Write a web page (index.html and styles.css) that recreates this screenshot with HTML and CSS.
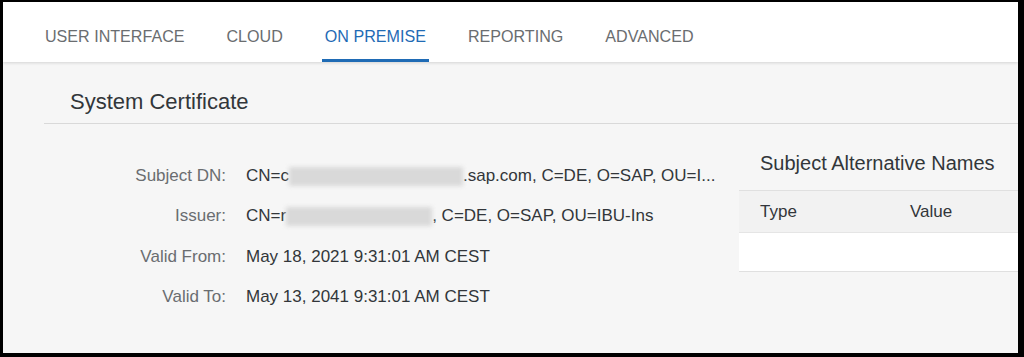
FILE: index.html
```html
<!DOCTYPE html>
<html>
<head>
<meta charset="utf-8">
<link rel="stylesheet" href="styles.css">
</head>
<body>
<div class="frame">
  <nav class="tabs">
    <span class="tab">USER INTERFACE</span>
    <span class="tab">CLOUD</span>
    <span class="tab active">ON PREMISE</span>
    <span class="tab">REPORTING</span>
    <span class="tab">ADVANCED</span>
  </nav>
  <main class="content">
    <section class="section">
      <h2 class="section-title">System Certificate</h2>
      <div class="section-body">
        <div class="form">
          <div class="row"><span class="label">Subject DN:</span><span class="value">CN=c<span class="blur blur-a"></span>.sap.com, C=DE, O=SAP, OU=I...</span></div>
          <div class="row"><span class="label">Issuer:</span><span class="value">CN=r<span class="blur blur-b"></span>, C=DE, O=SAP, OU=IBU-Ins</span></div>
          <div class="row"><span class="label">Valid From:</span><span class="value">May 18, 2021 9:31:01 AM CEST</span></div>
          <div class="row"><span class="label">Valid To:</span><span class="value">May 13, 2041 9:31:01 AM CEST</span></div>
        </div>
        <div class="san">
          <h3 class="san-title">Subject Alternative Names</h3>
          <div class="table">
            <div class="thead"><span class="col-type">Type</span><span class="col-value">Value</span></div>
            <div class="trow"></div>
          </div>
        </div>
      </div>
    </section>
  </main>
</div>
</body>
</html>
```

FILE: styles.css
```css
* { box-sizing: border-box; margin: 0; padding: 0; }
html, body { width: 1024px; height: 357px; overflow: hidden; }
body {
  background: #000;
  font-family: "Liberation Sans", Arial, sans-serif;
}
.frame {
  width: 1024px;
  height: 357px;
  border-style: solid;
  border-color: #000;
  border-width: 2px 6px 4px 3px;
  background: #f6f6f6;
  display: flex;
  flex-direction: column;
  overflow: hidden;
}
.tabs {
  height: 60px;
  flex: none;
  background: #fff;
  display: flex;
  align-items: stretch;
  gap: 36px;
  padding-left: 39px;
  box-shadow: 0 1px 3px rgba(0,0,0,0.14);
  position: relative;
  z-index: 1;
}
.tab {
  display: flex;
  align-items: center;
  padding: 12px 3px 0;
  font-size: 16.1px;
  color: #6a6d70;
  border-bottom: 3px solid transparent;
}
.tab.active {
  color: #1f6bb5;
  border-bottom-color: #1f6bb5;
}
.content {
  flex: 1;
  padding-left: 41px;
}
.section-title {
  font-weight: normal;
  font-size: 22px;
  line-height: 25px;
  color: #32363a;
  padding: 27px 0 0 26px;
  height: 62px;
  border-bottom: 1px solid #d9d9d9;
}
.section-body {
  display: flex;
}
.form {
  width: 695px;
  padding-top: 40px;
  display: flex;
  flex-direction: column;
  gap: 16.4px;
}
.row {
  display: flex;
  align-items: center;
  height: 24px;
  font-size: 17px;
}
.label {
  width: 182px;
  text-align: right;
  color: #6a6d70;
}
.value {
  margin-left: 20px;
  color: #32363a;
  display: flex;
  align-items: center;
  white-space: nowrap;
}
.blur {
  display: inline-block;
  height: 19px;
  background: #d9d9d9;
  filter: blur(2px);
}
.blur-a { width: 174px; }
.blur-b { width: 146px; }
.san {
  flex: 1;
}
.san-title {
  font-weight: normal;
  font-size: 20px;
  line-height: 23px;
  color: #32363a;
  padding: 28px 0 0 21px;
  height: 66px;
}
.table {
  border-top: 1px solid #e0e0e0;
}
.thead {
  height: 42px;
  background: #f2f2f2;
  display: flex;
  align-items: center;
  font-size: 17px;
  color: #32363a;
  border-bottom: 1px solid #e5e5e5;
}
.col-type { width: 171px; padding-left: 21px; }
.trow {
  height: 39px;
  background: #fff;
  border-bottom: 1px solid #e0e0e0;
}
```
